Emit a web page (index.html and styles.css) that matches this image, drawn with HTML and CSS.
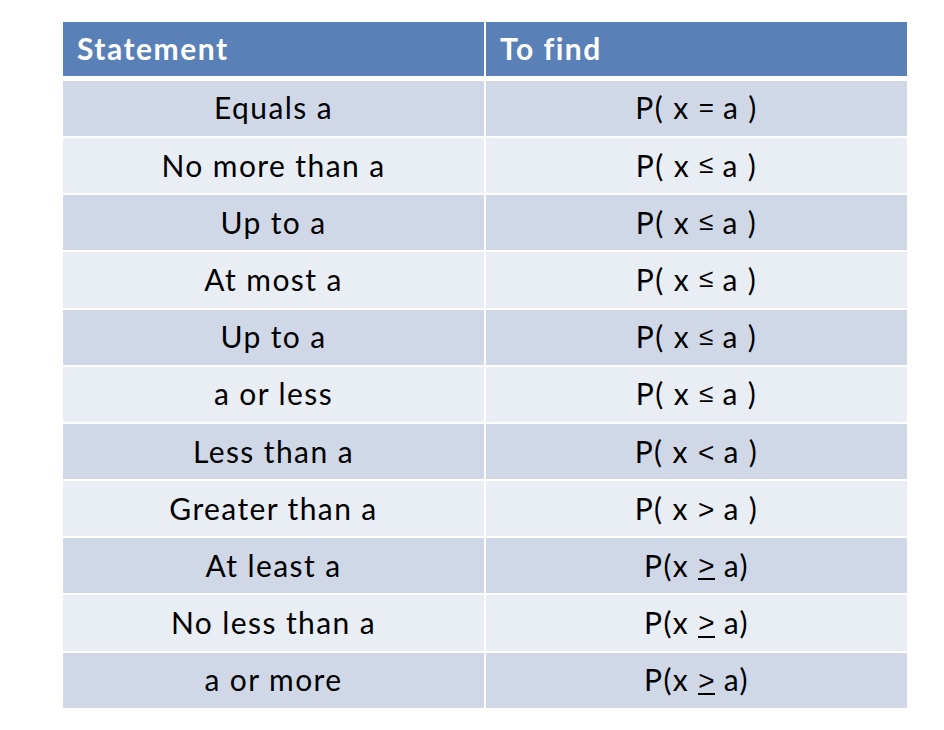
FILE: index.html
```html
<!DOCTYPE html>
<html>
<head>
<meta charset="utf-8">
<link rel="stylesheet" href="styles.css">
</head>
<body>
<div class="table">
  <div class="head">
    <div class="hcell">Statement</div>
    <div class="hcell">To find</div>
  </div>
  <div class="body">
    <div class="cell odd">Equals a</div><div class="cell odd">P( x <span class="op">=</span> a )</div>
    <div class="cell even">No more than a</div><div class="cell even">P( x <span class="op">≤</span> a )</div>
    <div class="cell odd">Up to a</div><div class="cell odd">P( x <span class="op">≤</span> a )</div>
    <div class="cell even">At most a</div><div class="cell even">P( x <span class="op">≤</span> a )</div>
    <div class="cell odd">Up to a</div><div class="cell odd">P( x <span class="op">≤</span> a )</div>
    <div class="cell even">a or less</div><div class="cell even">P( x <span class="op">≤</span> a )</div>
    <div class="cell odd">Less than a</div><div class="cell odd">P( x <span class="op ang">&lt;</span> a )</div>
    <div class="cell even">Greater than a</div><div class="cell even">P( x <span class="op ang">&gt;</span> a )</div>
    <div class="cell odd">At least a</div><div class="cell odd">P(x <span class="op ang ul">&gt;</span> a)</div>
    <div class="cell even">No less than a</div><div class="cell even">P(x <span class="op ang ul">&gt;</span> a)</div>
    <div class="cell odd">a or more</div><div class="cell odd">P(x <span class="op ang ul">&gt;</span> a)</div>
  </div>
</div>
</body>
</html>
```

FILE: styles.css
```css
html, body {
  margin: 0;
  padding: 0;
  background: #ffffff;
}
body {
  padding: 22px 0 0 63px;
  font-family: Lato, "Open Sans", "Liberation Sans", sans-serif;
}
.table {
  width: 844px;
}
.head {
  display: grid;
  grid-template-columns: 421px 421px;
  column-gap: 2px;
  height: 53.5px;
}
.hcell {
  background: #5a80b8;
  color: #ffffff;
  font-weight: 700;
  font-size: 30px;
  letter-spacing: 1.5px;
  display: flex;
  align-items: center;
  padding-left: 14px;
  padding-bottom: 1px;
}
.body {
  margin-top: 5.3px;
  display: grid;
  grid-template-columns: 421px 421px;
  grid-auto-rows: 55.2px;
  column-gap: 2px;
  row-gap: 2px;
}
.cell {
  display: flex;
  align-items: center;
  justify-content: center;
  font-size: 30px;
  letter-spacing: 1.4px;
  color: #000000;
  padding-bottom: 2px;
  white-space: pre;
}
.odd {
  background: #d0d8e8;
}
.even {
  background: #e9edf4;
}
.op {
  font-family: "Liberation Sans", sans-serif;
  font-size: 26px;
  letter-spacing: 0;
}
.ang {
  display: inline-block;
  font-size: 28px;
  line-height: 1;
  transform: translateY(2px);
}
.ul {
  border-bottom: 2px solid #000000;
  padding-bottom: 0;
  line-height: 0.9;
}
```
